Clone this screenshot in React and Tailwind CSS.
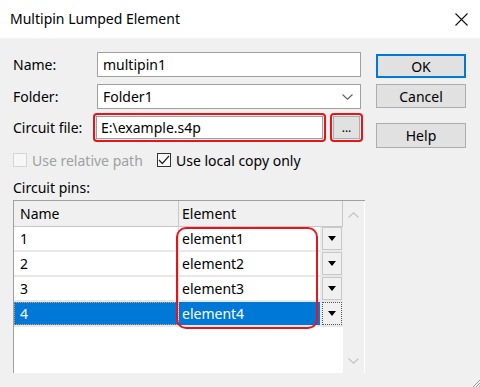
import { useState } from 'react';

const pins = [
    { name: '1', element: 'element1' },
    { name: '2', element: 'element2' },
    { name: '3', element: 'element3' },
    { name: '4', element: 'element4' },
];

function DropArrow() {
    return (
        <svg width="8" height="5" viewBox="0 0 8 5">
            <path d="M0 0h8L4 5z" fill="#000" />
        </svg>
    );
}

function Chevron({ up = false, color = '#606060' }) {
    return (
        <svg width="11" height="6" viewBox="0 0 11 6" className={up ? 'rotate-180' : ''}>
            <path d="M0.5 0.5L5.5 5.2L10.5 0.5" fill="none" stroke={color} strokeWidth="1.1" />
        </svg>
    );
}

export default function App() {
    const [selected, setSelected] = useState(3);
    const [localCopy, setLocalCopy] = useState(true);

    return (
        <div className="relative flex h-[387px] w-[480px] flex-col overflow-hidden bg-[#f0f0f0] font-['Noto_Sans',sans-serif] text-[14px] text-black">
            {/* title bar */}
            <div className="flex h-[38px] shrink-0 items-center justify-between bg-white pl-[10px] pr-[12px]">
                <span className="text-[14px] leading-none">Multipin Lumped Element</span>
                <svg width="13" height="13" viewBox="0 0 13 13">
                    <path d="M0.5 0.5L12.5 12.5M12.5 0.5L0.5 12.5" stroke="#111" strokeWidth="1.1" />
                </svg>
            </div>

            <div className="flex flex-1">
                {/* form */}
                <div className="ml-[13px] flex w-[352px] flex-col">
                    <div className="mt-[14px] flex h-[25px] items-center">
                        <span className="w-[84px]">Name:</span>
                        <div className="flex h-[25px] w-[264px] items-center border border-[#a0a0a0] bg-white px-[5px]">multipin1</div>
                    </div>

                    <div className="mt-[7px] flex h-[25px] items-center">
                        <span className="w-[84px]">Folder:</span>
                        <div className="flex h-[25px] w-[264px] items-center justify-between border border-[#a0a0a0] bg-white pl-[5px] pr-[7px]">
                            <span>Folder1</span>
                            <Chevron />
                        </div>
                    </div>

                    <div className="mt-[4px] flex h-[29px] items-center">
                        <span className="w-[80px]">Circuit file:</span>
                        <div className="h-[29px] w-[233px] rounded-[4px] border-2 border-[#e8141c] p-[1px]">
                            <div className="flex h-full items-center border border-[#a0a0a0] bg-white px-[4px]">E:\example.s4p</div>
                        </div>
                        <div className="ml-[4px] h-[29px] w-[33px] rounded-[4px] border-2 border-[#e8141c] p-[1px]">
                            <button className="flex h-full w-full items-end justify-center border border-[#adadad] bg-[#e1e1e1] pb-[4px] text-[12px] leading-none">
                                ...
                            </button>
                        </div>
                    </div>

                    <div className="mt-[11px] flex h-[14px] items-center">
                        <div className="flex w-[144px] items-center">
                            <span className="h-[14px] w-[14px] border border-[#d4d4d4] bg-[#f7f7f7]" />
                            <span className="ml-[5px] text-[#a0a0a0]">Use relative path</span>
                        </div>
                        <div className="flex cursor-default items-center" onClick={() => setLocalCopy(!localCopy)}>
                            <span className="flex h-[14px] w-[14px] items-center justify-center border border-[#333] bg-white">
                                {localCopy && (
                                    <svg width="12" height="10" viewBox="0 0 12 10">
                                        <path d="M1 5L4.3 8.5L11 1" fill="none" stroke="#222" strokeWidth="1.2" />
                                    </svg>
                                )}
                            </span>
                            <span className="ml-[5px]">Use local copy only</span>
                        </div>
                    </div>

                    <div className="mt-[12px] h-[18px] leading-[18px]">Circuit pins:</div>

                    {/* pins grid */}
                    <div className="relative mt-[3px] flex h-[173px] w-[352px] border-l border-t border-[#a0a0a0]">
                        <div className="flex w-[329px] flex-col bg-white">
                            <div className="flex h-[26px] border-b border-[#c8c8c8] bg-[#f0f0f0]">
                                <div className="flex w-[165px] items-center border-r border-[#c8c8c8] pl-[6px]">Name</div>
                                <div className="flex flex-1 items-center border-r border-[#c8c8c8] pl-[3px]">Element</div>
                            </div>
                            {pins.map((p, i) => {
                                const on = i === selected;
                                return (
                                    <div
                                        key={p.name}
                                        onClick={() => setSelected(i)}
                                        className="flex h-[25px] border-b-2 border-[#e8e8e8] bg-[#ececec]"
                                    >
                                        <div
                                            className={
                                                (on
                                                    ? 'bg-[#0078d7] text-white outline-1 -outline-offset-1 outline-dotted outline-[#d9a066]'
                                                    : 'bg-white') +
                                                ' flex w-[165px] items-center border-r border-[#e0e0e0] pl-[6px]'
                                            }
                                        >
                                            {p.name}
                                        </div>
                                        <div
                                            className={
                                                (on ? 'bg-[#0078d7] text-white' : 'bg-white') +
                                                ' flex w-[141px] items-center pl-[3px]'
                                            }
                                        >
                                            {p.element}
                                        </div>
                                        <div
                                            className={
                                                (on ? 'border-dotted border-[#555]' : 'border-[#c8c8c8]') +
                                                ' ml-[2px] flex w-[20px] items-center justify-center border bg-[#f0f0f0]'
                                            }
                                        >
                                            <DropArrow />
                                        </div>
                                    </div>
                                );
                            })}
                        </div>
                        <div className="flex w-[22px] flex-col items-center justify-between border-r border-white bg-[#f0f0f0] pb-[9px] pt-[11px]">
                            <Chevron up color="#c2c2c2" />
                            <Chevron color="#c2c2c2" />
                        </div>

                        <div className="pointer-events-none absolute left-[162px] top-[26px] h-[102px] w-[142px] rounded-[10px] border-2 border-[#e8141c]" />
                    </div>
                </div>

                {/* buttons */}
                <div className="ml-[11px] flex w-[90px] flex-col">
                    <button className="mt-[16px] h-[24px] border-2 border-[#0078d7] bg-[#e1e1e1]">OK</button>
                    <button className="mt-[6px] h-[24px] border border-[#adadad] bg-[#e1e1e1]">Cancel</button>
                    <button className="mt-[15px] h-[25px] border border-[#adadad] bg-[#e1e1e1]">Help</button>
                </div>
            </div>

            <svg className="absolute bottom-0 right-0" width="10" height="8" viewBox="0 0 10 8">
                <path d="M10 1L3 8M10 4L6 8M10 7L9 8" stroke="#9a9a9a" strokeWidth="1" />
            </svg>
        </div>
    );
}
